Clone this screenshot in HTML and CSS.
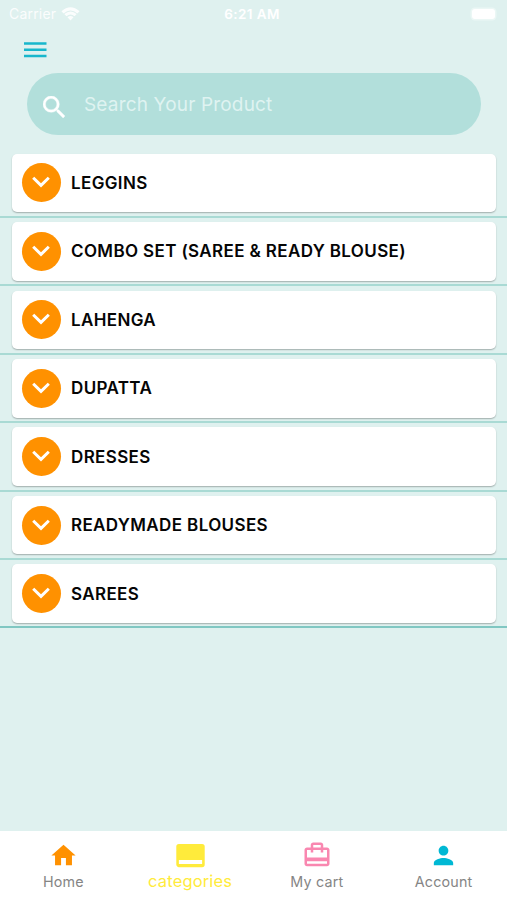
FILE: index.html
```html
<!DOCTYPE html>
<html lang="en">
<head>
<meta charset="utf-8">
<title>Categories</title>
<link rel="stylesheet" href="styles.css">
</head>
<body>
<div class="app">
  <header class="status">
    <div class="carrier"><span>Carrier</span>
      <svg class="wifi" viewBox="0 0 20 15"><path d="M10 14.500 6.700 11Q10 8.200 13.300 11ZM5.700 10 3.300 7.600Q10 1.800 16.700 7.600L14.300 10Q10 6.200 5.700 10ZM2.600 6.900.300 4.500Q10-3.800 19.700 4.500L17.400 6.900Q10 .8 2.600 6.900Z"/></svg>
    </div>
    <div class="time">6:21 AM</div>
    <div class="battery-wrap"><span class="battery"></span></div>
  </header>
  <div class="toolbar"><svg class="menu" viewBox="0 0 22.500 16"><path d="M0 1.400h22.500M0 7.800h22.500M0 14.100h22.500"/></svg></div>
  <div class="search">
    <svg viewBox="3 3 17.500 17.500"><path d="M15.500 14h-.79l-.28-.27A6.470 6.470 0 0 0 16 9.500 6.500 6.500 0 1 0 9.500 16c1.610 0 3.090-.59 4.230-1.570l.27.28v.79l5 4.990L20.490 19l-4.990-5zm-6 0C7.010 14 5 11.990 5 9.500S7.010 5 9.500 5 14 7.010 14 9.500 11.990 14 9.500 14z"/></svg>
    <span>Search Your Product</span>
  </div>
  <main class="list">
    <div class="row"><div class="card"><span class="dot"><svg viewBox="0 0 18 12"><path d="M1.200 1.800 9 9.400 16.800 1.800"/></svg></span><b>LEGGINS</b></div></div>
    <div class="row"><div class="card"><span class="dot"><svg viewBox="0 0 18 12"><path d="M1.200 1.800 9 9.400 16.800 1.800"/></svg></span><b>COMBO SET (SAREE &amp; READY BLOUSE)</b></div></div>
    <div class="row"><div class="card"><span class="dot"><svg viewBox="0 0 18 12"><path d="M1.200 1.800 9 9.400 16.800 1.800"/></svg></span><b>LAHENGA</b></div></div>
    <div class="row"><div class="card"><span class="dot"><svg viewBox="0 0 18 12"><path d="M1.200 1.800 9 9.400 16.800 1.800"/></svg></span><b>DUPATTA</b></div></div>
    <div class="row"><div class="card"><span class="dot"><svg viewBox="0 0 18 12"><path d="M1.200 1.800 9 9.400 16.800 1.800"/></svg></span><b>DRESSES</b></div></div>
    <div class="row"><div class="card"><span class="dot"><svg viewBox="0 0 18 12"><path d="M1.200 1.800 9 9.400 16.800 1.800"/></svg></span><b>READYMADE BLOUSES</b></div></div>
    <div class="row"><div class="card"><span class="dot"><svg viewBox="0 0 18 12"><path d="M1.200 1.800 9 9.400 16.800 1.800"/></svg></span><b>SAREES</b></div></div>
  </main>
  <nav class="tabs">
    <div class="tab home"><svg viewBox="0 0 24 24"><path d="M10 20v-6h4v6h5v-8h3L12 3 2 12h3v8z"/></svg><span>Home</span></div>
    <div class="tab categories"><svg viewBox="0 0 24 24"><path fill-rule="evenodd" d="M21 3H3a2 2 0 0 0-2 2v14c0 1.100.9 2 2 2h18a2 2 0 0 0 2-2V5a2 2 0 0 0-2-2zM21 15.500H3v3h18z"/></svg><span>categories</span></div>
    <div class="tab cart"><svg viewBox="0 0 24 24"><path d="M20 6h-3V4c0-1.110-.89-2-2-2H9c-1.110 0-2 .89-2 2v2H4c-1.110 0-2 .89-2 2v11c0 1.110.89 2 2 2h16c1.110 0 2-.89 2-2V8c0-1.110-.89-2-2-2zM9 4h6v2H9V4zm11 15H4v-2h16v2zm0-5H4V8h3v2h2V8h6v2h2V8h3v6z"/></svg><span>My cart</span></div>
    <div class="tab account"><svg viewBox="0 0 24 24"><path d="M12 12c2.210 0 4-1.790 4-4s-1.790-4-4-4-4 1.790-4 4 1.790 4 4 4zm0 2c-2.670 0-8 1.340-8 4v2h16v-2c0-2.660-5.330-4-8-4z"/></svg><span>Account</span></div>
  </nav>
</div>
</body>
</html>
```
FILE: styles.css
```css
* { box-sizing: border-box; }
body { margin: 0; font-family: Inter, "Liberation Sans", sans-serif; }
svg { display: block; }
.app { width: 507px; height: 900px; display: flex; flex-direction: column; background: #dff1ef; overflow: hidden; }
.status { height: 27px; padding: 0 12px 0 9px; display: grid; grid-template-columns: 1fr auto 1fr; align-items: center; color: #fff; }
.carrier { display: flex; align-items: center; gap: 5px; font-size: 14px; letter-spacing: .2px; opacity: .88; }
.wifi { width: 19px; height: 14px; fill: #fff; }
.time { font-size: 13.500px; font-weight: 600; letter-spacing: .4px; }
.battery-wrap { display: flex; justify-content: flex-end; }
.battery { width: 23px; height: 10px; border-radius: 3px; background: #fff; box-shadow: 0 0 0 1.500px #ebf7f5; }
.toolbar { height: 46px; padding: 15px 24px; }
.menu { width: 22.500px; height: 16px; stroke: #18b7cc; stroke-width: 2.500; }
.search { height: 62px; margin: 0 26px 0 27px; flex: none; border-radius: 31px; padding-left: 16px; display: flex; align-items: center; background: #b2dfdb; }
.search svg { width: 22px; height: 22px; fill: #fff; stroke: #fff; stroke-width: .3; margin-top: 5px; }
.search span { margin-left: 19px; font-size: 19px; letter-spacing: .17px; color: #dff3f1; }
.list { padding-top: 14.400px; }
.row { height: 68.450px; padding: 4.300px 11px 0 12px; border-bottom: 2px solid #a9dad4; }
.row:last-child { border-color: #80c7c2; }
.card { height: 58.500px; padding-left: 10px; display: flex; align-items: center; border-radius: 5px; background: #fff; box-shadow: 0 1px 1.500px rgba(0,0,0,.28); }
.dot { width: 39px; height: 39px; border-radius: 50%; background: #ff9100; display: flex; align-items: center; justify-content: center; }
.dot svg { width: 18px; height: 12px; margin: 0 1px 1px 0; fill: none; stroke: #fff; stroke-width: 3; }
.card b { margin-left: 10px; font-size: 17px; font-weight: 600; letter-spacing: .37px; color: #050505; white-space: nowrap; }
.tabs { height: 69px; margin-top: auto; flex: none; display: grid; grid-template-columns: repeat(4, 1fr); background: #fff; }
.tab { display: flex; flex-direction: column; align-items: center; padding-top: 10px; font-size: 14.300px; line-height: 18px; letter-spacing: .2px; color: #858585; }
.tab svg { width: 29px; height: 29px; margin-bottom: 3px; }
.home svg { fill: #ff9100; }
.categories { padding-top: 9px; color: #ffeb3b; font-size: 16.500px; letter-spacing: .15px; }
.categories svg { width: 31px; height: 31px; margin-bottom: 1px; fill: #ffeb3b; }
.cart svg { width: 30px; height: 30px; margin-bottom: 2px; fill: #f987b0; }
.cart { padding-top: 9px; }
.cart svg { margin-bottom: 3px; }
.account svg { fill: #00b8d4; }
```
